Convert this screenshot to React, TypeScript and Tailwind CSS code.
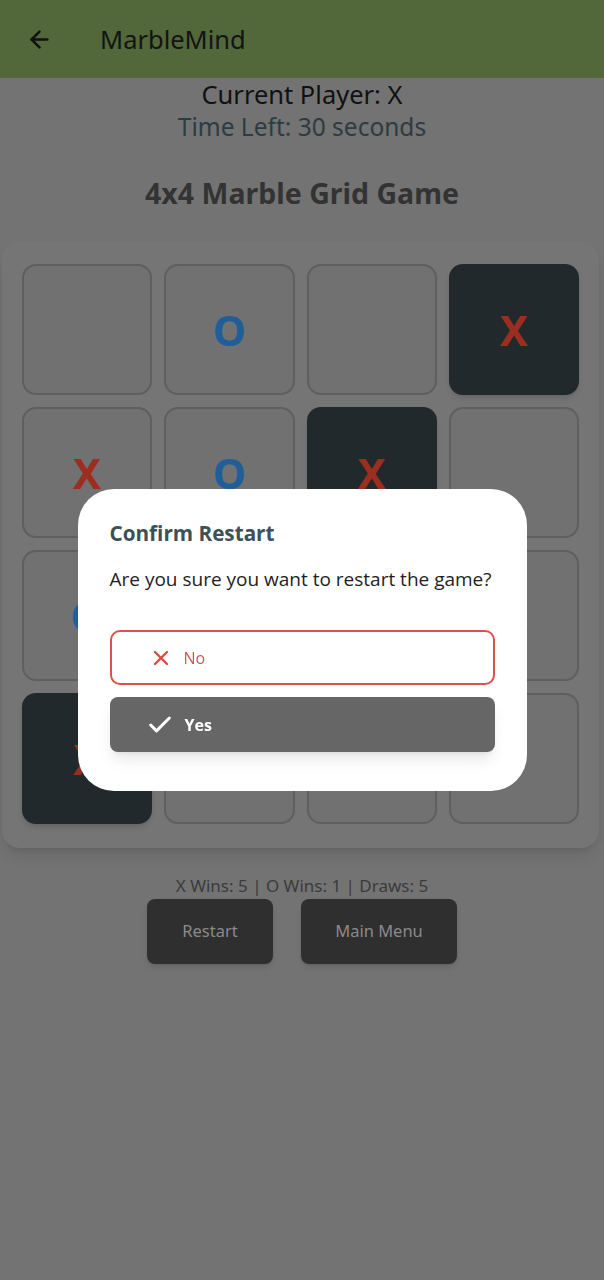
import React from 'react';
import { ArrowLeft, X, Check } from 'lucide-react';

type Cell = { mark: '' | 'X' | 'O'; dark?: boolean };

const board: Cell[] = [
  { mark: '' }, { mark: 'O' }, { mark: '' }, { mark: 'X', dark: true },
  { mark: 'X' }, { mark: 'O' }, { mark: 'X', dark: true }, { mark: '' },
  { mark: 'O' }, { mark: '' }, { mark: '' }, { mark: 'X' },
  { mark: 'X', dark: true }, { mark: '' }, { mark: '' }, { mark: '' },
];

function BoardCell({ cell }: { cell: Cell }) {
  return (
    <div
      className={
        cell.dark
          ? 'h-[131px] rounded-[14px] bg-[#22292c] shadow-md flex items-center justify-center'
          : 'h-[131px] rounded-[14px] border-2 border-[#5f5f5f] bg-[#717171] flex items-center justify-center'
      }
    >
      {cell.mark && (
        <span
          className={
            cell.mark === 'X'
              ? 'text-[42px] font-bold text-[#9c2e1f] leading-none'
              : 'text-[42px] font-bold text-[#1f5e98] leading-none'
          }
        >
          {cell.mark}
        </span>
      )}
    </div>
  );
}

export default function App() {
  return (
    <div className="min-h-[1280px] w-[604px] bg-[#737373] font-['Noto_Sans',sans-serif] relative">
      {/* App bar */}
      <header className="h-[78px] bg-[#52673a] flex items-center px-[26px]">
        <ArrowLeft size={27} strokeWidth={2.2} className="text-[#111]" />
        <h1 className="ml-[47px] text-[25.5px] text-[#141414]">MarbleMind</h1>
      </header>

      {/* Status */}
      <div className="flex flex-col items-center">
        <p className="mt-[0px] text-[25.5px] leading-[33px] text-[#111]">Current Player: X</p>
        <p className="text-[24.5px] leading-[32px] text-[#2d3b42]">Time Left: 30 seconds</p>
        <h2 className="mt-[32px] text-[28.5px] leading-[37px] font-bold text-[#333]">4x4 Marble Grid Game</h2>
      </div>

      {/* Board */}
      <div className="mt-[30px] ml-[2px] mr-[5px] rounded-[18px] bg-[#757575] shadow-lg px-5 pt-[22px] pb-[24px]">
        <div className="grid grid-cols-4 gap-3">
          {board.map((c, i) => (
            <BoardCell key={i} cell={c} />
          ))}
        </div>
      </div>

      {/* Score + actions */}
      <div className="flex flex-col items-center mt-[27px]">
        <p className="text-[17px] leading-[22px] text-[#3b3b3b]">X Wins: 5 | O Wins: 1 | Draws: 5</p>
        <div className="flex gap-[28px] mt-[2px]">
          <button className="w-[126px] h-[65px] rounded-[8px] bg-[#2f2f2f] shadow-md text-[16.5px] text-[#8a8a8a]">
            Restart
          </button>
          <button className="w-[156px] h-[65px] rounded-[8px] bg-[#2f2f2f] shadow-md text-[16.5px] text-[#8a8a8a]">
            Main Menu
          </button>
        </div>
      </div>

      {/* Dialog */}
      <div className="fixed inset-0 flex items-center justify-center">
        <div className="w-[449px] rounded-[36px] bg-white px-8 pt-[31px] pb-[39px] font-['Open_Sans',sans-serif]">
          <h3 className="text-[20.7px] leading-[26px] font-bold text-[#3d4f58]">Confirm Restart</h3>
          <p className="mt-[20px] text-[19px] leading-[26px] text-[#1e1e1e] whitespace-nowrap">
            Are you sure you want to restart the game?
          </p>
          <div className="mt-[38px] flex flex-col gap-3">
            <button className="h-[55px] rounded-[10px] border-2 border-[#de5149] flex items-center pl-[37px]">
              <X size={24} strokeWidth={2.4} className="text-[#df4a40]" />
              <span className="ml-[11px] text-[16px] text-[#d8544a]">No</span>
            </button>
            <button className="h-[55px] rounded-[8px] bg-[#666666] shadow-lg flex items-center pl-[36px]">
              <Check size={28} strokeWidth={2.6} className="text-white" />
              <span className="ml-[11px] text-[16px] font-bold text-white">Yes</span>
            </button>
          </div>
        </div>
      </div>
    </div>
  );
}
